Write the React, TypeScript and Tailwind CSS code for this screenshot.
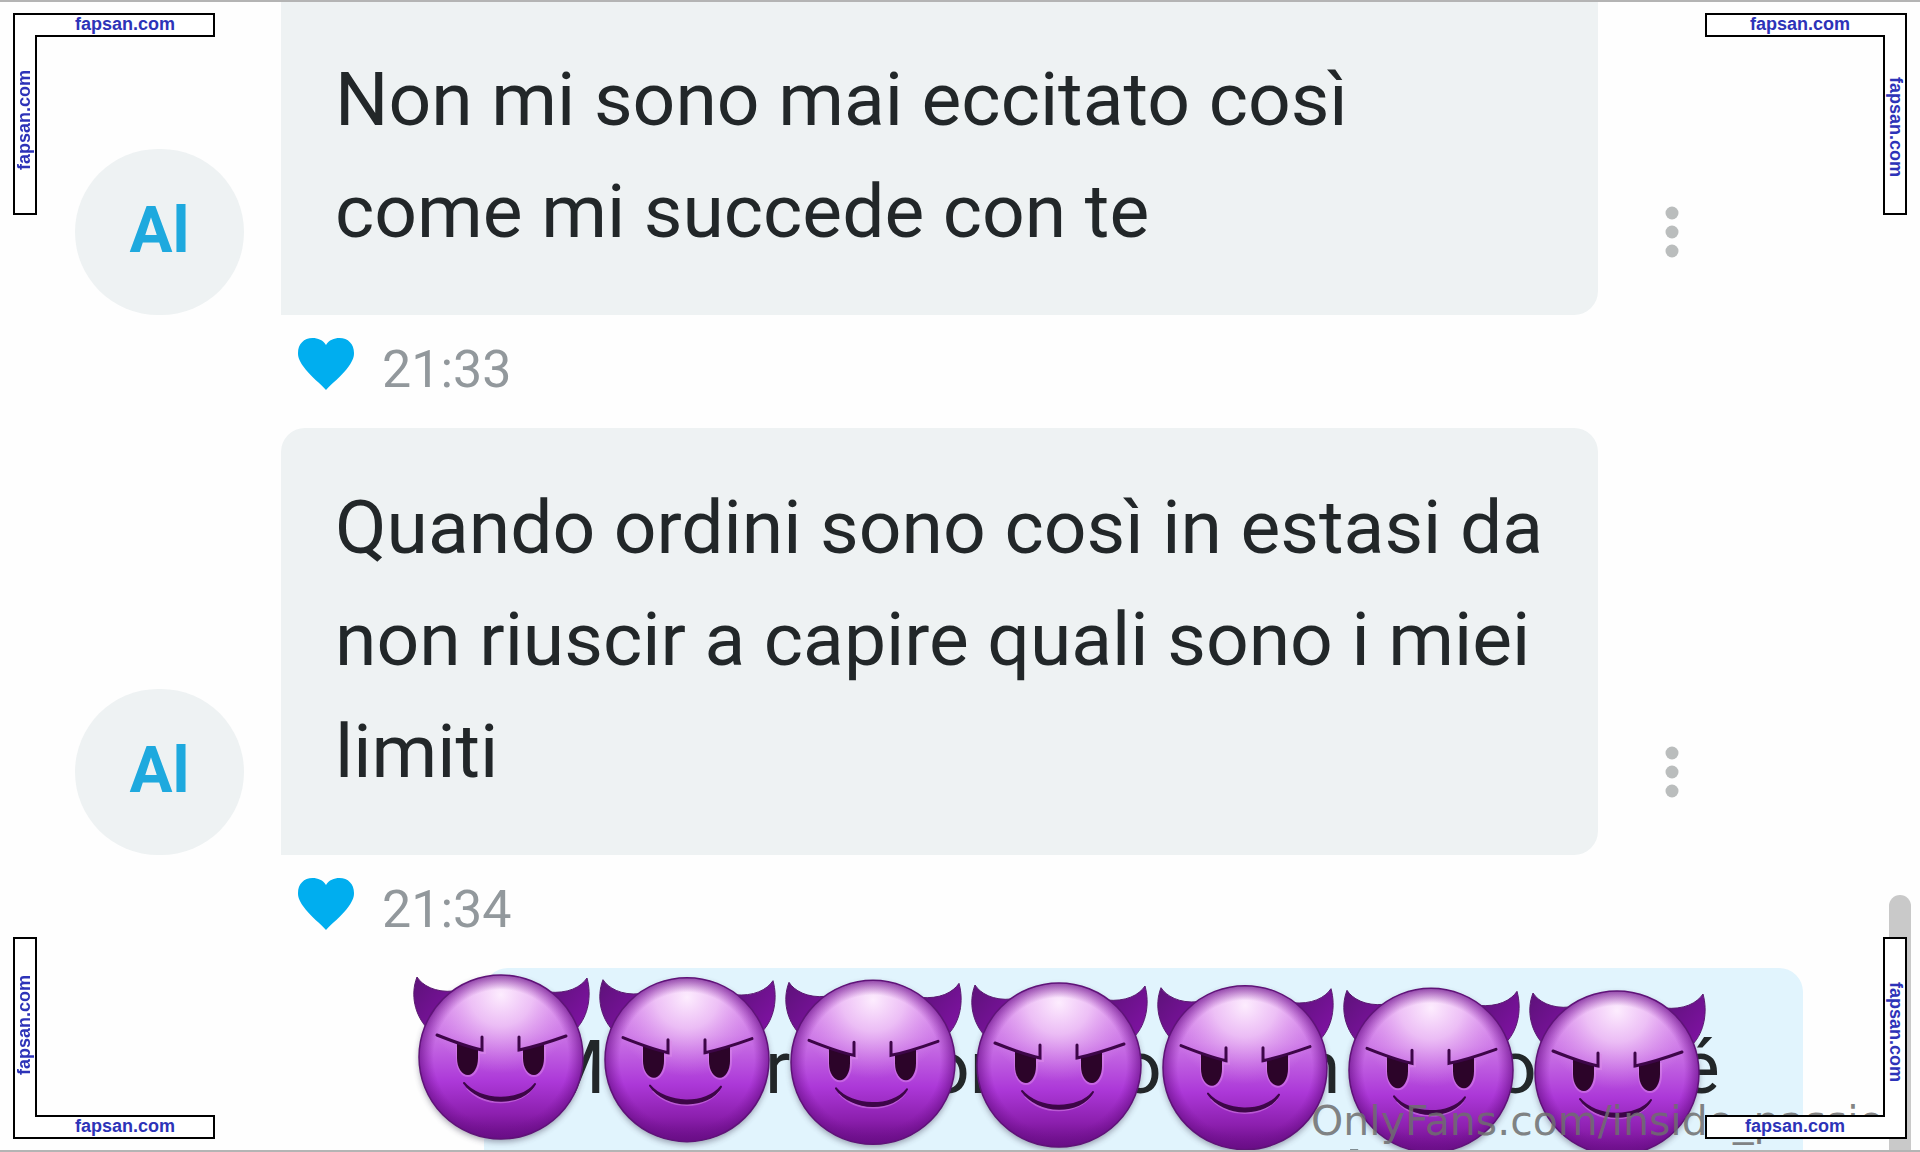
// App.tsx
import clsx from 'clsx';

type Message = {
  text: string;
  time: string;
  continued?: boolean;
};

const messages: Message[] = [
  { text: 'Non mi sono mai eccitato così come mi succede con te', time: '21:33', continued: true },
  { text: 'Quando ordini sono così in estasi da non riuscir a capire quali sono i miei limiti', time: '21:34' },
];

const devils = [0, 1, 2, 3, 4, 5, 6];

function HeartIcon() {
  return (
    <svg viewBox="0 0 56 52" className="w-14 h-[52px]" aria-hidden="true">
      <path
        d="M28 52C24 47 12 38 5 28C1 22 0 19 0 15C0 6 6 0 14.500 0C20 0 25 2 28 7C31 2 36 0 41.500 0C50 0 56 6 56 15C56 19 55 22 51 28C44 38 32 47 28 52Z"
        fill="#00aeef"
      />
    </svg>
  );
}

function DotsIcon() {
  return (
    <svg viewBox="0 0 14 52" className="w-[14px] h-[52px]" fill="#babdbd" aria-hidden="true">
      <circle cx="7" cy="7" r="6.500" />
      <circle cx="7" cy="26" r="6.500" />
      <circle cx="7" cy="45" r="6.500" />
    </svg>
  );
}

function MessageRow({ message }: { message: Message }) {
  return (
    <article>
      <div className="flex items-end">
        <div className="w-[169px] h-[166px] pb-[2px] rounded-full bg-[#eef2f3] text-[#1ea9de] text-[64px] font-bold flex items-center justify-center shrink-0">
          Al
        </div>
        <p
          className={clsx(
            'flex-1 ml-[37px] pt-[43px] pb-12 pl-[54px] pr-[50px] bg-[#eef2f3] text-[#222729] text-[75px] leading-[112px] rounded-br-3xl',
            !message.continued && 'rounded-t-3xl'
          )}
        >
          {message.text}
        </p>
        <button type="button" aria-label="Menu" className="w-[148px] h-[166px] flex items-center justify-center shrink-0">
          <DotsIcon />
        </button>
      </div>
      <div className="flex items-start h-[113px] pt-[23px] pl-[223px] gap-7">
        <HeartIcon />
        <time className="mt-[6px] text-[52px] leading-none text-[#92989c]">{message.time}</time>
      </div>
    </article>
  );
}

function DevilStrip() {
  return (
    <svg viewBox="0 0 1310 200" className="absolute left-[410px] top-[970px] w-[1310px] h-[200px]" aria-hidden="true">
      <defs>
        <linearGradient id="face" x1="0" y1="0" x2="0" y2="1">
          <stop offset="0" stopColor="#dc94ee" />
          <stop offset="0.350" stopColor="#cb76e6" />
          <stop offset="0.650" stopColor="#ac38d8" />
          <stop offset="0.850" stopColor="#8c1fae" />
          <stop offset="1" stopColor="#640a80" />
        </linearGradient>
        <radialGradient id="shine" cx="0.500" cy="0.120" r="0.480">
          <stop offset="0" stopColor="#fff2ff" stopOpacity="0.950" />
          <stop offset="0.400" stopColor="#f8d9fb" stopOpacity="0.700" />
          <stop offset="1" stopColor="#e29af0" stopOpacity="0" />
        </radialGradient>
        <radialGradient id="rim" cx="0.500" cy="0.500" r="0.500">
          <stop offset="0.820" stopColor="#7a1499" stopOpacity="0" />
          <stop offset="1" stopColor="#6a0f88" stopOpacity="0.700" />
        </radialGradient>
        <linearGradient id="horn" x1="0" y1="0" x2="1" y2="1">
          <stop offset="0" stopColor="#5d1279" />
          <stop offset="1" stopColor="#8212a6" />
        </linearGradient>
        <filter id="shade" x="-0.100" y="-0.100" width="1.200" height="1.250">
          <feGaussianBlur stdDeviation="3" />
        </filter>
        <g id="devil">
          <circle cx="91" cy="90" r="82" fill="#3a3550" opacity="0.450" filter="url(#shade)" />
          <path d="M7 7C12 15 25 23 44 21L17 58C5 45 0 25 7 7Z" fill="url(#horn)" stroke="#5a1a70" />
          <path d="M177 8C171 17 158 24 138 22L167 58C178 46 182 26 177 8Z" fill="url(#horn)" stroke="#5a1a70" />
          <circle cx="91" cy="87" r="82" fill="url(#face)" />
          <circle cx="91" cy="87" r="82" fill="url(#shine)" />
          <circle cx="91" cy="87" r="82" fill="url(#rim)" stroke="#5f1378" strokeWidth="1.500" />
          <g fill="none" stroke="#dc8bea" strokeWidth="2" opacity="0.500">
            <path d="M47 77V88C47 99 52 106 58 106C64 106 69 99 69 88V83H75V68" />
            <path d="M135 77V88C135 99 130 106 124 106C118 106 113 99 113 88V83" />
            <path d="M57 118C74 137 108 137 123 118" />
          </g>
          <g fill="#2c0429">
            <path d="M47 72L68 79V88C68 98 63 105 58 105C52 105 47 98 47 88Z" />
            <path d="M134 73L113 79V88C113 98 118 105 124 105C129 105 134 98 134 88Z" />
          </g>
          <g fill="none" stroke="#3d0648" strokeWidth="3" strokeLinecap="round">
            <path d="M27 65C42 71 58 77 72 80V67" />
            <path d="M156 66C142 71 124 77 109 80V67" />
          </g>
          <path d="M54 113C70 132 110 133 125 114C112 137 70 136 54 113Z" fill="#3d0648" stroke="#3d0648" strokeWidth="2" strokeLinejoin="round" />
        </g>
      </defs>
      {devils.map((n) => (
        <use key={n} href="#devil" x={n * 186} y={(n * 8) / 3} />
      ))}
    </svg>
  );
}

// L-shaped frame in one corner with the site name along both arms
function CornerFrame({ right, bottom }: { right?: boolean; bottom?: boolean }) {
  return (
    <div
      className={clsx(
        "absolute w-[202px] h-[202px] font-['Liberation_Sans',sans-serif] text-[18px] leading-[22px] font-bold text-[#2d33b8]",
        right ? 'right-[13px]' : 'left-[13px]',
        bottom ? 'bottom-[13px]' : 'top-[13px]'
      )}
    >
      <svg
        viewBox="0 0 202 202"
        className={clsx('absolute inset-0 w-full h-full', right && '-scale-x-100', bottom && '-scale-y-100')}
        aria-hidden="true"
      >
        <path d="M1 1H201V23H23V201H1Z" fill="#fff" stroke="#000" strokeWidth="2" />
      </svg>
      <span
        className={clsx(
          'absolute',
          bottom ? 'bottom-[2px]' : 'top-0',
          right ? (bottom ? 'left-10' : 'left-[45px]') : 'left-[62px]'
        )}
      >
        fapsan.com
      </span>
      <span
        className={clsx(
          'absolute [writing-mode:vertical-rl]',
          right ? 'right-0' : 'left-0 rotate-180',
          right ? (bottom ? 'top-[45px]' : 'top-16') : bottom ? 'top-[38px]' : 'top-[57px]'
        )}
      >
        fapsan.com
      </span>
    </div>
  );
}

export default function App() {
  return (
    <div className="relative h-screen overflow-hidden bg-[#fefefe] font-['Roboto',sans-serif]">
      <main className="pl-[75px] pr-[174px]">
        {messages.map((message) => (
          <MessageRow key={message.time} message={message} />
        ))}
      </main>

      {/* own message, mostly hidden behind the stickers */}
      <div className="ml-[484px] mr-[117px] pt-[43px] pl-14 h-80 rounded-t-3xl bg-[#e1f4fd] text-[#222729] text-[75px] leading-[112px]">
        <p className="grid grid-cols-[225px_162px_192px_180px_195px_186px_1fr]">
          <span>M</span>
          <span>r</span>
          <span>on</span>
          <span>o</span>
          <span>n</span>
          <span>o</span>
          <span>é</span>
        </p>
        <p className="grid grid-cols-[812px_1fr]">
          <span>S</span>
          <span>ì</span>
        </p>
      </div>

      <DevilStrip />
      <div className="absolute right-[9px] top-[895px] bottom-0 w-[22px] rounded-t-full bg-[#c9c9c9]" />
      <div className="absolute left-[1311px] bottom-[7px] whitespace-nowrap font-['DejaVu_Sans',sans-serif] text-[41px] leading-[48px] text-[#6e6e6e]/85">
        OnlyFans.com/inside_passion
      </div>
      <div className="absolute inset-0 border-y-2 border-[#b4b4b4] pointer-events-none" />

      <CornerFrame />
      <CornerFrame right />
      <CornerFrame bottom />
      <CornerFrame right bottom />
    </div>
  );
}
